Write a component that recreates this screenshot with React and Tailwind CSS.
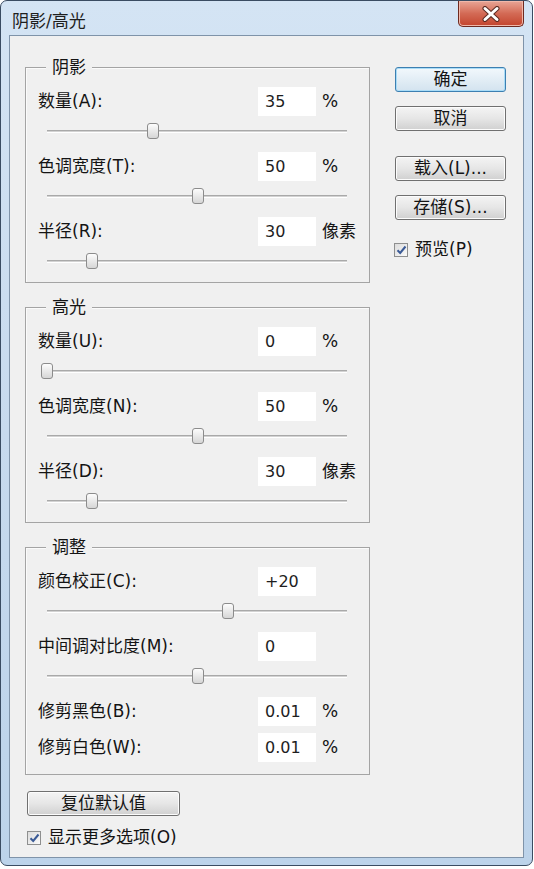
import React from 'react';

const FONT = { fontFamily: '"DejaVu Sans", "Noto Sans CJK SC", sans-serif' };

// slider thumb centres, as a fraction of the 300px track
const groups = [
  {
    title: '阴影',
    rows: [
      { label: '数量(A):', value: '35', unit: '%', pos: 0.353 },
      { label: '色调宽度(T):', value: '50', unit: '%', pos: 0.503 },
      { label: '半径(R):', value: '30', unit: '像素', pos: 0.15 },
    ],
  },
  {
    title: '高光',
    rows: [
      { label: '数量(U):', value: '0', unit: '%', pos: 0 },
      { label: '色调宽度(N):', value: '50', unit: '%', pos: 0.503 },
      { label: '半径(D):', value: '30', unit: '像素', pos: 0.15 },
    ],
  },
];

const adjust = [
  { label: '颜色校正(C):', value: '+20', unit: '', pos: 0.603 },
  { label: '中间调对比度(M):', value: '0', unit: '', pos: 0.503 },
];

function Slider({ pos }) {
  return (
    <div className="h-[36px] pt-[14px]">
      <div className="relative ml-[21px] h-[3px] w-[300px] border-y border-t-[#a9a9a9] border-b-white bg-[#d2d2d2]">
        <div
          className="absolute top-[-8px] h-[16px] w-[12px] rounded-[3px] border border-[#8c8c8c] bg-gradient-to-b from-[#fdfdfd] to-[#d6d6d6]"
          style={{ left: Math.round(pos * 300) - 6 }}
        />
      </div>
    </div>
  );
}

function Field({ label, value, unit }) {
  return (
    <div className="flex h-[29px] items-center">
      <span className="w-[232px] pl-[12px] text-[17px] text-[#141414]">{label}</span>
      <div className="flex h-[29px] w-[58px] items-center bg-white pl-[7px] text-[16px] text-[#1e1e1e]">{value}</div>
      <span className="ml-[6px] text-[17px] text-[#141414]">{unit}</span>
    </div>
  );
}

function Group({ title, className = '', children }) {
  return (
    <div className={`relative border border-[#a4a4a4] pt-[19px] shadow-[inset_1px_1px_0_#fbfbfb] ${className}`}>
      <span className="absolute left-[20px] top-[-12px] bg-[#f0f0f0] px-[6px] text-[17px] leading-[22px] text-[#141414]">
        {title}
      </span>
      {children}
    </div>
  );
}

function Button({ children, primary = false, className = '' }) {
  return (
    <button
      className={`flex h-[25px] items-center justify-center rounded-[3px] border text-[17px] leading-none text-[#141414] ${
        primary
          ? 'border-[#3c7fb1] bg-gradient-to-b from-[#f2f8fc] to-[#d3e3ef] shadow-[inset_0_0_0_1px_#a9dcf7]'
          : 'border-[#707070] bg-gradient-to-b from-[#f4f4f4] via-[#e6e6e6] to-[#d0d0d0] shadow-[inset_0_0_0_1px_#fcfcfc]'
      } ${className}`}
    >
      {children}
    </button>
  );
}

function Checkbox({ label }) {
  return (
    <div className="flex items-center gap-[7px]">
      <div className="flex h-[14px] w-[14px] items-center justify-center border border-[#8e8f8f] bg-gradient-to-br from-[#dcdcdc] to-[#fafafa]">
        <svg width="11" height="10" viewBox="0 0 11 10">
          <path d="M1.5 5.2 L4.2 8 L9.5 1.5" fill="none" stroke="#3a5a96" strokeWidth="2" />
        </svg>
      </div>
      <span className="text-[17px] text-[#141414]">{label}</span>
    </div>
  );
}

export default function App() {
  return (
    <div className="h-[869px] w-[534px] bg-white" style={FONT}>
      <div className="flex h-[866px] w-[533px] flex-col rounded-[7px] border border-[#3a4c62] bg-gradient-to-b from-[#d4e4f4] via-[#c7daee] to-[#bcd3ea]">
        {/* title bar */}
        <div className="flex h-[34px] shrink-0">
          <span className="ml-[11px] mt-[9px] text-[17px] leading-[22px] text-[#1e1e1e]">阴影/高光</span>
          <div className="ml-auto mr-[8px] flex h-[26px] w-[66px] items-center justify-center rounded-b-[5px] border border-t-0 border-[#6e2a20] bg-gradient-to-b from-[#e8a596] via-[#d36a55] to-[#c3432c] shadow-[inset_0_0_0_1px_#f0b8aa]">
            <svg width="20" height="16" viewBox="0 0 20 16">
              <path d="M4 2.5 L16 13.5 M16 2.5 L4 13.5" stroke="#5a2a22" strokeWidth="5" strokeLinecap="round" />
              <path d="M4 2.5 L16 13.5 M16 2.5 L4 13.5" stroke="#ffffff" strokeWidth="3" strokeLinecap="round" />
            </svg>
          </div>
        </div>

        {/* client area */}
        <div className="mx-[8px] mb-[7px] flex flex-1 border border-[#7f93a9] bg-[#f0f0f0]">
          <div className="ml-[15px] w-[345px] pt-[31px]">
            {groups.map((g, i) => (
              <Group key={g.title} title={g.title} className={i > 0 ? 'mt-[24px]' : ''}>
                {g.rows.map((r) => (
                  <div key={r.label}>
                    <Field {...r} />
                    <Slider pos={r.pos} />
                  </div>
                ))}
              </Group>
            ))}

            <Group title="调整" className="mt-[24px] pb-[12px]">
              {adjust.map((r) => (
                <div key={r.label}>
                  <Field {...r} />
                  <Slider pos={r.pos} />
                </div>
              ))}
              <Field label="修剪黑色(B):" value="0.01" unit="%" />
              <div className="mt-[7px]">
                <Field label="修剪白色(W):" value="0.01" unit="%" />
              </div>
            </Group>

            <Button className="mt-[16px] ml-[2px] w-[153px]">复位默认值</Button>
            <div className="ml-[2px] mt-[9px]">
              <Checkbox label="显示更多选项(O)" />
            </div>
          </div>

          <div className="ml-[25px] flex w-[111px] flex-col pt-[31px]">
            <Button primary>确定</Button>
            <Button className="mt-[14px]">取消</Button>
            <Button className="mt-[25px]">载入(L)...</Button>
            <Button className="mt-[14px]">存储(S)...</Button>
            <div className="ml-[-1px] mt-[17px]">
              <Checkbox label="预览(P)" />
            </div>
          </div>
        </div>
      </div>
    </div>
  );
}
